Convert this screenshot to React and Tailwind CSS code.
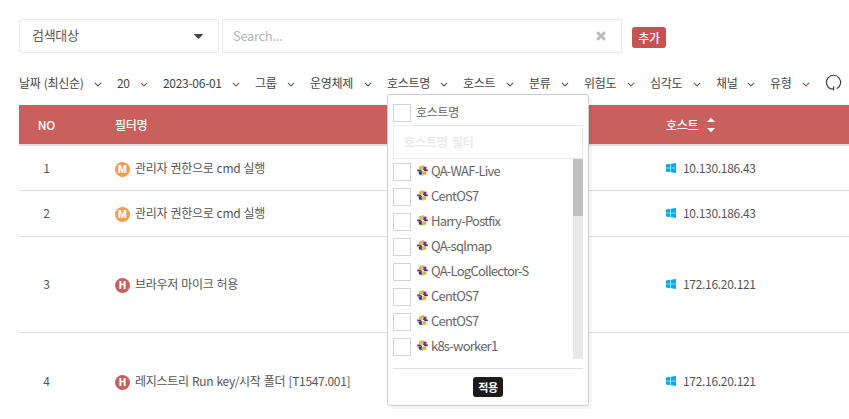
import React from "react";

const filters = [
  { label: "날짜 (최신순)", width: "w-[98px]" },
  { label: "20", width: "w-[46px]", accent: "#a0522d" },
  { label: "2023-06-01", width: "w-[92px]", accent: "#a0522d" },
  { label: "그룹", width: "w-[55px]", accent: "#3d7a63" },
  { label: "운영체제", width: "w-[77px]", accent: "#3b5590" },
  { label: "호스트명", width: "w-[76px]", open: true },
  { label: "호스트", width: "w-[66px]", accent: "#3b5590" },
  { label: "분류", width: "w-[55px]" },
  { label: "위험도", width: "w-[66px]", accent: "#8a5a40" },
  { label: "심각도", width: "w-[66px]", accent: "#8a5a40" },
  { label: "채널", width: "w-[54px]", accent: "#3b6580" },
  { label: "유형", width: "w-[55px]", accent: "#a0522d" },
];

const hosts = [
  "QA-WAF-Live",
  "CentOS7",
  "Harry-Postfix",
  "QA-sqlmap",
  "QA-LogCollector-S",
  "CentOS7",
  "CentOS7",
  "k8s-worker1",
];

const rows = [
  { no: 1, level: "M", name: "관리자 권한으로 cmd 실행", ip: "10.130.186.43", height: "h-[45px]" },
  { no: 2, level: "M", name: "관리자 권한으로 cmd 실행", ip: "10.130.186.43", height: "h-[46px] pb-px" },
  { no: 3, level: "H", name: "브라우저 마이크 허용", ip: "172.16.20.121", height: "h-[96px] pb-px" },
  { no: 4, level: "H", name: "레지스트리 Run key/시작 폴더 [T1547.001]", ip: "172.16.20.121", height: "h-[97px]" },
];

function Chevron({ color = "#555" }) {
  return (
    <svg width="8" height="5" viewBox="0 0 8 5" fill="none" stroke={color} strokeWidth="1.1">
      <path d="M0.9 0.8 4 3.9 7.1 0.8" />
    </svg>
  );
}

function CentosIcon() {
  return (
    <svg width="11" height="11" viewBox="0 0 11 11" className="shrink-0">
      <path fill="#a8d64a" d="M2 1.4 5.2.6V5L1.8 4z" />
      <path fill="#932279" d="M6 1.4l3.6.3-.5 3L6 5z" />
      <path fill="#efa724" d="M6 6.2l3.2.3v3L6.2 10z" />
      <path fill="#35308a" d="M1.5 6.6 5 6v4l-3-.6z" />
      <path fill="#efa724" d="M5 .2h1.6v3.6L5.5 5z" />
      <path fill="#35308a" d="M7.6 4.3 10.8 4.6v1.6L7 6z" />
      <path fill="#a8d64a" d="M4.6 7.5 5.8 6l.4 4.8H4.6z" />
      <path fill="#932279" d="M.2 4.6h3L5 5.8l-4.8.6z" />
      <path fill="#fff" d="M5 5h1v1H5z" />
    </svg>
  );
}

function WindowsIcon() {
  return (
    <svg width="10" height="10" viewBox="0 0 10 10" fill="#00adef" className="shrink-0">
      <path d="M0 1.4 4.3.8v3.9H0zM4.9.7 10 0v4.7H4.9zM0 5.3h4.3v3.9L0 8.6zM4.9 5.3H10V10l-5.1-.7z" />
    </svg>
  );
}

function Checkbox() {
  return <span className="block size-[18px] shrink-0 border border-[#d4d4d4] bg-white" />;
}

function HostMenu() {
  return (
    <div className="absolute top-[11px] left-0 z-10 flex h-[312px] w-[202px] flex-col rounded-[3px] border border-[#ccc] bg-white px-[5px] pt-[9px] text-[#666] shadow-[3px_3px_0_rgba(0,0,0,0.04)]">
      <div className="flex h-[18px] items-center gap-[5px]">
        <Checkbox />
        <span className="-mt-[2px]">호스트명</span>
      </div>
      <input
        placeholder="호스트명 필터"
        className="mt-[3px] h-[34px] w-[190px] shrink-0 border border-[#eaeaea] px-[10px] pb-px font-bold tracking-[-0.1px] [word-spacing:1.5px] outline-none placeholder:text-[#ebebeb]"
      />
      <div className="flex h-[200px] w-[190px] shrink-0 overflow-hidden">
        <div className="flex flex-1 flex-col gap-[7px] pt-1">
          {hosts.map((host, i) => (
            <div key={i} className="flex h-[18px] items-center">
              <Checkbox />
              <span className="ml-[6px] -mt-[3px]"><CentosIcon /></span>
              <span className="ml-[3px] -mt-[2px] text-[13px] tracking-[-0.77px]">{host}</span>
            </div>
          ))}
        </div>
        <div className="w-[10px] bg-[#e8e8e8]">
          <div className="h-[57px] bg-[#bfbfbf]" />
        </div>
      </div>
      <div className="mt-[9px] flex w-[190px] justify-center border-t border-[#e0e0e0] pt-2">
        <button className="h-5 w-[30px] rounded-[3px] bg-[#1a1a1f] text-[11px] leading-[18px] font-bold text-white">적용</button>
      </div>
    </div>
  );
}

export default function App() {
  return (
    <div className="h-[419px] w-[849px] overflow-hidden bg-white font-['Noto_Sans_CJK_KR','Noto_Sans',sans-serif] text-[12px] leading-[18px] tracking-[-0.3px] whitespace-nowrap text-[#555]">
      <div className="flex h-[54px] pt-[19px] pl-[19px]">
        <div className="flex h-[34px] w-[200px] items-center justify-between rounded-[3px] border border-[#eaeaea] pr-[15px] pl-[12px]">
          <span className="-mt-[2px] text-[13px]">검색대상</span>
          <svg width="9" height="5" viewBox="0 0 9 5" fill="#444"><path d="M.5 0h8q.5.5 0 1L5 4.6q-.5.4-1 0L.5 1Q0 .5.5 0z" /></svg>
        </div>
        <div className="ml-[3px] flex h-[34px] w-[400px] items-center justify-between rounded-[2px] border border-[#eaeaea] pr-[15px] pl-[10px]">
          <span className="text-[13px] tracking-[-0.35px] text-[#b5b5b5]">Search...</span>
          <svg width="10" height="10" viewBox="0 0 10 10" stroke="#bbb" strokeWidth="3"><path d="M1.2 1.2 8.8 8.8M8.8 1.2 1.2 8.8" /></svg>
        </div>
        <button className="mt-2 ml-[10px] h-[21px] w-[34px] rounded-[3px] bg-[#c65353] text-[12px] leading-[20px] font-medium text-white">추가</button>
      </div>

      <div className="flex h-[51px] pt-[19px] pl-[19px] text-[#444]">
        {filters.map((f) => (
          <div key={f.label} className={`relative h-0 shrink-0 ${f.width}`}>
            <div className="flex h-[22px] items-center justify-between pr-[15px]">
              <span className="-mt-[2px] [word-spacing:1px]">{f.label}</span>
              <Chevron color={f.accent} />
            </div>
            {f.open && (
              <div className="relative">
                <div className="absolute -top-[12px] left-0"><HostMenu /></div>
              </div>
            )}
          </div>
        ))}
        <svg className="shrink-0" width="18" height="20" viewBox="0 0 18 20" fill="none" stroke="#444" strokeWidth="1.2">
          <path d="M5.8 15.9A7.1 7.1 0 1 1 11.7 15.7M5.2 15.8H8.6M8.6 13.2V17.6" />
        </svg>
      </div>

      <div className="ml-[19px] w-[830px]">
        <div className="flex h-[41px] items-center border-b-2 border-[#ddd] bg-[#c9605d] bg-clip-padding font-medium text-white">
          <div className="w-[55px] text-center">NO</div>
          <div className="w-[592px] pl-[41px]">필터명</div>
          <div className="flex items-center gap-[9px]">
            <span>호스트</span>
            <svg width="8" height="16" viewBox="0 0 8 16" fill="#fff"><path d="M0 5 4 .8 8 5zM0 11h8l-4 4.2z" /></svg>
          </div>
        </div>
        {rows.map((r) => (
          <div key={r.no} className={`flex items-center border-b border-[#ddd] ${r.height}`}>
            <div className="w-[55px] text-center">{r.no}</div>
            <div className="flex w-[592px] items-center pl-[41px]">
              <span className={`mt-[3px] mr-[5px] size-[15px] rounded-full text-center font-['Roboto',sans-serif] text-[10px] leading-[15px] font-black tracking-normal text-white ${r.level === "M" ? "bg-[#f39c52]" : "bg-[#c9605d]"}`}>
                {r.level}
              </span>
              <span className="[word-spacing:0.8px]">{r.name}</span>
            </div>
            <div className="flex items-center gap-[7px]">
              <WindowsIcon />
              <span>{r.ip}</span>
            </div>
          </div>
        ))}
      </div>
    </div>
  );
}
